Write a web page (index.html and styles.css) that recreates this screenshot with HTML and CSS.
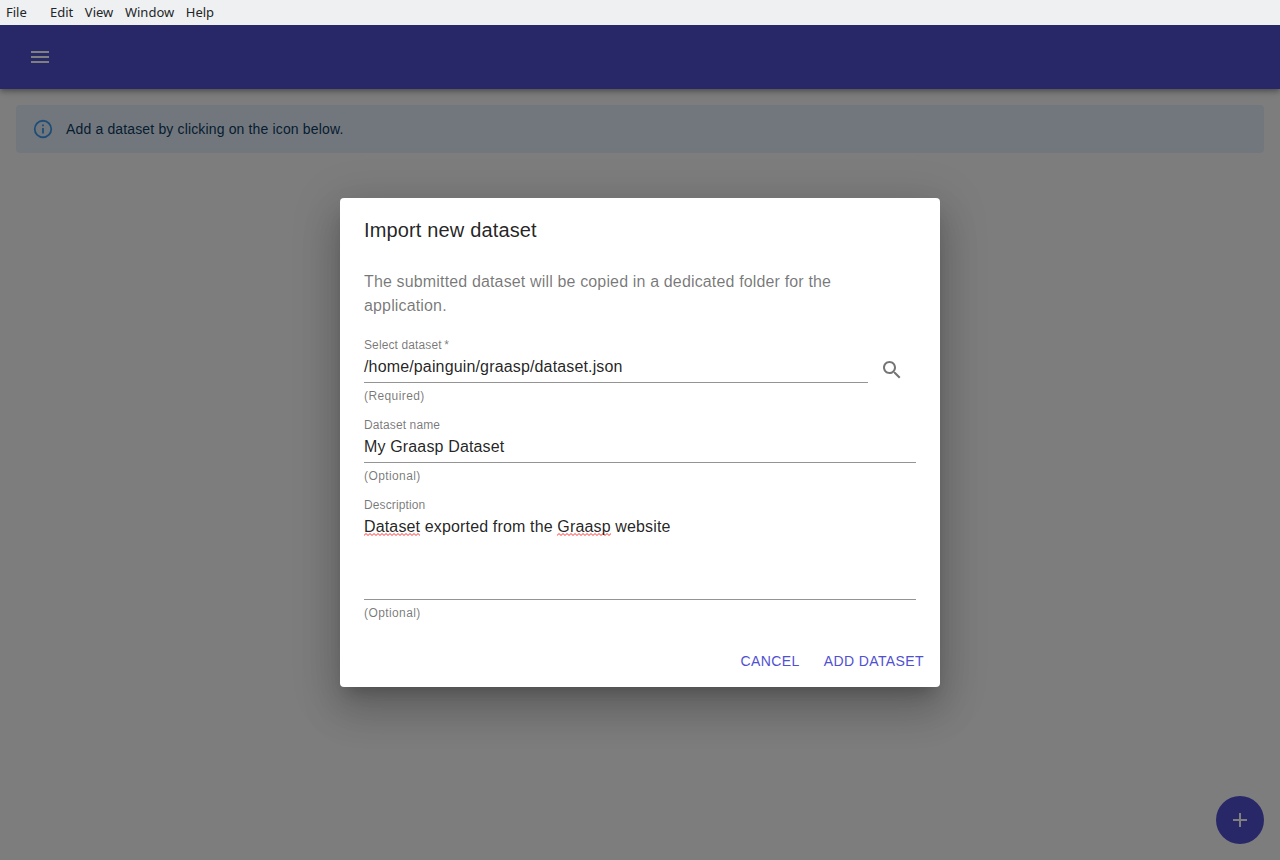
FILE: index.html
```html
<!DOCTYPE html>
<html lang="en">
<head>
<meta charset="utf-8">
<title>Graasp Insights</title>
<link rel="stylesheet" href="styles.css">
</head>
<body>
<nav class="menubar">
  <span class="menu-item menu-file">File</span>
  <span class="menu-item">Edit</span>
  <span class="menu-item">View</span>
  <span class="menu-item">Window</span>
  <span class="menu-item">Help</span>
</nav>
<div class="app">
  <header class="appbar">
    <svg class="icon" viewBox="0 0 24 24"><path d="M3 18h18v-2H3v2zm0-5h18v-2H3v2zm0-7v2h18V6H3z"/></svg>
  </header>
  <main class="main">
    <div class="alert">
      <svg class="alert-icon" viewBox="0 0 24 24"><path d="M11,9H13V7H11M12,20C7.59,20 4,16.41 4,12C4,7.59 7.59,4 12,4C16.41,4 20,7.59 20,12C20,16.41 16.41,20 12,20M12,2A10,10 0 0,0 2,12A10,10 0 0,0 12,22A10,10 0 0,0 22,12A10,10 0 0,0 12,2M11,17H13V11H11V17Z"/></svg>
      <span>Add a dataset by clicking on the icon below.</span>
    </div>
  </main>
  <button class="fab"><svg class="icon" viewBox="0 0 24 24"><path d="M19 13h-6v6h-2v-6H5v-2h6V5h2v6h6v2z"/></svg></button>
  <div class="backdrop">
    <section class="dialog">
      <h2 class="dialog-title">Import new dataset</h2>
      <div class="dialog-content">
        <p class="intro">The submitted dataset will be copied in a dedicated folder for the application.</p>
        <div class="field-row">
          <div class="field">
            <div class="label">Select dataset&thinsp;*</div>
            <div class="input">/home/painguin/graasp/dataset.json</div>
            <div class="helper">(Required)</div>
          </div>
          <button class="icon-button"><svg class="icon" viewBox="0 0 24 24"><path d="M15.5 14h-.79l-.28-.27C15.41 12.59 16 11.11 16 9.5 16 5.91 13.09 3 9.5 3S3 5.91 3 9.5 5.91 16 9.5 16c1.61 0 3.09-.59 4.23-1.57l.27.28v.79l5 4.99L20.49 19l-4.99-5zm-6 0C7.01 14 5 11.99 5 9.5S7.01 5 9.5 5 14 7.01 14 9.5 11.99 14 9.5 14z"/></svg></button>
        </div>
        <div class="field">
          <div class="label">Dataset name</div>
          <div class="input">My Graasp Dataset</div>
          <div class="helper">(Optional)</div>
        </div>
        <div class="field">
          <div class="label">Description</div>
          <div class="input input-multiline"><span class="misspelt">Dataset</span> exported from the <span class="misspelt">Graasp</span> website</div>
          <div class="helper">(Optional)</div>
        </div>
      </div>
      <footer class="actions">
        <button class="button">CANCEL</button>
        <button class="button">ADD DATASET</button>
      </footer>
    </section>
  </div>
</div>
</body>
</html>
```
FILE: styles.css
```css
* { box-sizing: border-box; }
body {
  margin: 0;
  height: 860px;
  display: flex;
  flex-direction: column;
  overflow: hidden;
  font-family: "Liberation Sans", Arial, sans-serif;
  color: rgba(0, 0, 0, 0.87);
}
button { border: 0; background: none; font-family: inherit; margin: 0; }
.menubar {
  height: 25px;
  flex: none;
  display: flex;
  align-items: center;
  gap: 11.6px;
  padding: 0 6px;
  background: #eff0f1;
  color: #232629;
  font: 13px/25px "Noto Sans", sans-serif;
}
.menu-file { margin-right: 11.6px; }
.app {
  position: relative;
  flex: 1;
  display: flex;
  flex-direction: column;
  overflow: hidden;
  background: #fafafa;
}
.icon { display: block; width: 24px; height: 24px; fill: currentColor; }
.appbar {
  height: 64px;
  flex: none;
  display: flex;
  align-items: center;
  padding: 0 28px;
  background: #5050d2;
  color: #fff;
  box-shadow: 0 2px 4px -1px rgba(0,0,0,.2), 0 4px 5px 0 rgba(0,0,0,.14), 0 1px 10px 0 rgba(0,0,0,.12);
}
.main { padding: 16px; }
.alert {
  display: flex;
  align-items: center;
  gap: 12px;
  height: 48px;
  padding: 0 16px;
  border-radius: 4px;
  background: #e5effd;
  color: #0d3c61;
  font-size: 14px;
  line-height: 20px;
  letter-spacing: 0.01071em;
}
.alert-icon { width: 22px; height: 22px; fill: #3a9bec; }
.fab {
  position: absolute;
  right: 16px;
  bottom: 16px;
  width: 48px;
  height: 48px;
  display: grid;
  place-items: center;
  padding: 0;
  border-radius: 50%;
  background: #5050d2;
  color: #fff;
}
.backdrop {
  position: absolute;
  inset: 0;
  display: flex;
  justify-content: center;
  align-items: center;
  background: rgba(0, 0, 0, 0.5);
}
.dialog {
  width: 600px;
  height: 489px;
  display: flex;
  flex-direction: column;
  border-radius: 4px;
  background: #fff;
  box-shadow: 0 11px 15px -7px rgba(0,0,0,.2), 0 24px 38px 3px rgba(0,0,0,.14), 0 9px 46px 8px rgba(0,0,0,.12);
}
.dialog-title {
  margin: 0;
  padding: 16px 24px;
  font-size: 20px;
  font-weight: 400;
  line-height: 32px;
  letter-spacing: 0.0075em;
}
.dialog-content { flex: 1; padding: 8px 24px; }
.intro {
  margin: 0 0 12px;
  color: rgba(0, 0, 0, 0.54);
  font-size: 16px;
  line-height: 24px;
  letter-spacing: 0.00938em;
}
.field-row { display: flex; align-items: center; }
.field { flex: 1; padding: 8px 0 4px; }
/* Floated label: set at input size and scaled down */
.label {
  height: 16px;
  color: rgba(0, 0, 0, 0.54);
  font-size: 16px;
  line-height: 16px;
  letter-spacing: 0.00938em;
  transform: translateY(1.5px) scale(0.75);
  transform-origin: top left;
}
.input {
  height: 29px;
  padding-top: 3px;
  border-bottom: 1px solid #949494;
  font-size: 16px;
  line-height: 19px;
  letter-spacing: 0.00938em;
}
.input-multiline { height: 86px; }
.misspelt {
  padding-bottom: 1px;
  background: url("data:image/svg+xml,%3Csvg xmlns='http://www.w3.org/2000/svg' width='4' height='3'%3E%3Cpath d='M-1 1.5L0 2.5L2 .5L4 2.5L5 1.5' fill='none' stroke='red' stroke-opacity='.8'/%3E%3C/svg%3E") left bottom repeat-x;
}
.helper {
  margin-top: 3px;
  color: rgba(0, 0, 0, 0.54);
  font-size: 12px;
  line-height: 20px;
  letter-spacing: 0.03333em;
}
.icon-button { padding: 12px; color: rgba(0, 0, 0, 0.54); }
.actions { display: flex; justify-content: flex-end; gap: 8px; padding: 8px; }
.button {
  height: 36px;
  padding: 6px 8px;
  color: #5050d2;
  font-size: 14px;
  line-height: 24px;
  letter-spacing: 0.02857em;
}
```
